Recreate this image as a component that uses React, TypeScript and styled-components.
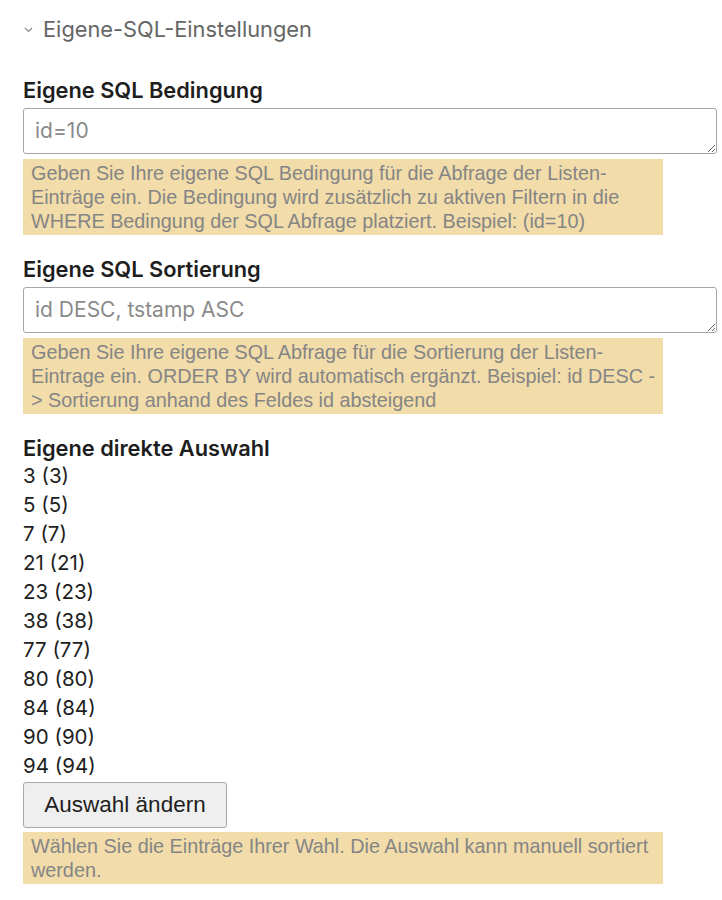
import styled, { createGlobalStyle } from "styled-components";

const GlobalStyle = createGlobalStyle`
  body {
    margin: 0;
    background: #fff;
    font-family: "Liberation Sans", Arial, sans-serif;
    color: #222;
  }
`;

const Page = styled.div`
  padding: 12px 5px 16px 23px;
`;

const Legend = styled.div`
  display: flex;
  align-items: center;
  gap: 9px;
  height: 34px;
  color: #666;
  font-family: Inter, sans-serif;
  font-size: 21.8px;
  margin-bottom: 30px;
`;

const Field = styled.div`
  display: flex;
  flex-direction: column;
  margin-bottom: 20px;
`;

const Label = styled.label<{ $gap: number }>`
  font-family: Inter, sans-serif;
  font-weight: 600;
  font-size: 21.8px;
  line-height: 28px;
  color: #1e1e1e;
  margin-bottom: ${(p) => p.$gap}px;
`;

const Area = styled.textarea`
  box-sizing: border-box;
  width: 100%;
  height: 46px;
  border: 1px solid #a5a5a5;
  border-radius: 3px;
  padding: 10px 11px;
  font-family: Inter, sans-serif;
  font-size: 21px;
  line-height: 24px;
  color: #222;
  resize: vertical;
  &::placeholder {
    color: #8a8a8a;
  }
`;

const Help = styled.p<{ $top?: number }>`
  box-sizing: border-box;
  width: 640px;
  margin: ${(p) => p.$top ?? 5}px 0 0;
  padding: 2px 3px 2px 8px;
  background: #f1dcaa;
  color: #858585;
  font-size: 19.8px;
  line-height: 24px;
`;

const List = styled.ul`
  list-style: none;
  margin: 0;
  padding: 0;
  font-family: Inter, sans-serif;
  font-size: 20.5px;
  line-height: 29px;
  color: #1e1e1e;
`;

const Button = styled.button`
  margin-top: 2px;
  align-self: flex-start;
  width: 204px;
  height: 46px;
  background: #efefef;
  border: 1px solid #a8a8a8;
  border-radius: 3px;
  font-family: "Liberation Sans", Arial, sans-serif;
  font-size: 22.5px;
  color: #1e1e1e;
`;

const items = [3, 5, 7, 21, 23, 38, 77, 80, 84, 90, 94];

export default function App() {
  return (
    <Page>
      <GlobalStyle />
      <Legend>
        <svg width="11" height="11" viewBox="0 0 11 11">
          <path d="M2 4l3.5 3.5L9 4" fill="none" stroke="#888" strokeWidth="1.2" />
        </svg>
        Eigene-SQL-Einstellungen
      </Legend>

      <Field>
        <Label $gap={4}>Eigene SQL Bedingung</Label>
        <Area placeholder="id=10" />
        <Help>
          Geben Sie Ihre eigene SQL Bedingung für die Abfrage der Listen-Einträge ein. Die
          Bedingung wird zusätzlich zu aktiven Filtern in die WHERE Bedingung der SQL Abfrage
          platziert. Beispiel: (id=10)
        </Help>
      </Field>

      <Field>
        <Label $gap={4}>Eigene SQL Sortierung</Label>
        <Area placeholder="id DESC, tstamp ASC" />
        <Help>
          Geben Sie Ihre eigene SQL Abfrage für die Sortierung der Listen-Eintrage ein. ORDER BY
          wird automatisch ergänzt. Beispiel: id DESC -<wbr />&gt; Sortierung anhand des Feldes
          id absteigend
        </Help>
      </Field>

      <Field>
        <Label $gap={-1}>Eigene direkte Auswahl</Label>
        <List>
          {items.map((n) => (
            <li key={n}>
              {n} ({n})
            </li>
          ))}
        </List>
        <Button>Auswahl ändern</Button>
        <Help $top={4}>
          Wählen Sie die Einträge Ihrer Wahl. Die Auswahl kann manuell sortiert werden.
        </Help>
      </Field>
    </Page>
  );
}
